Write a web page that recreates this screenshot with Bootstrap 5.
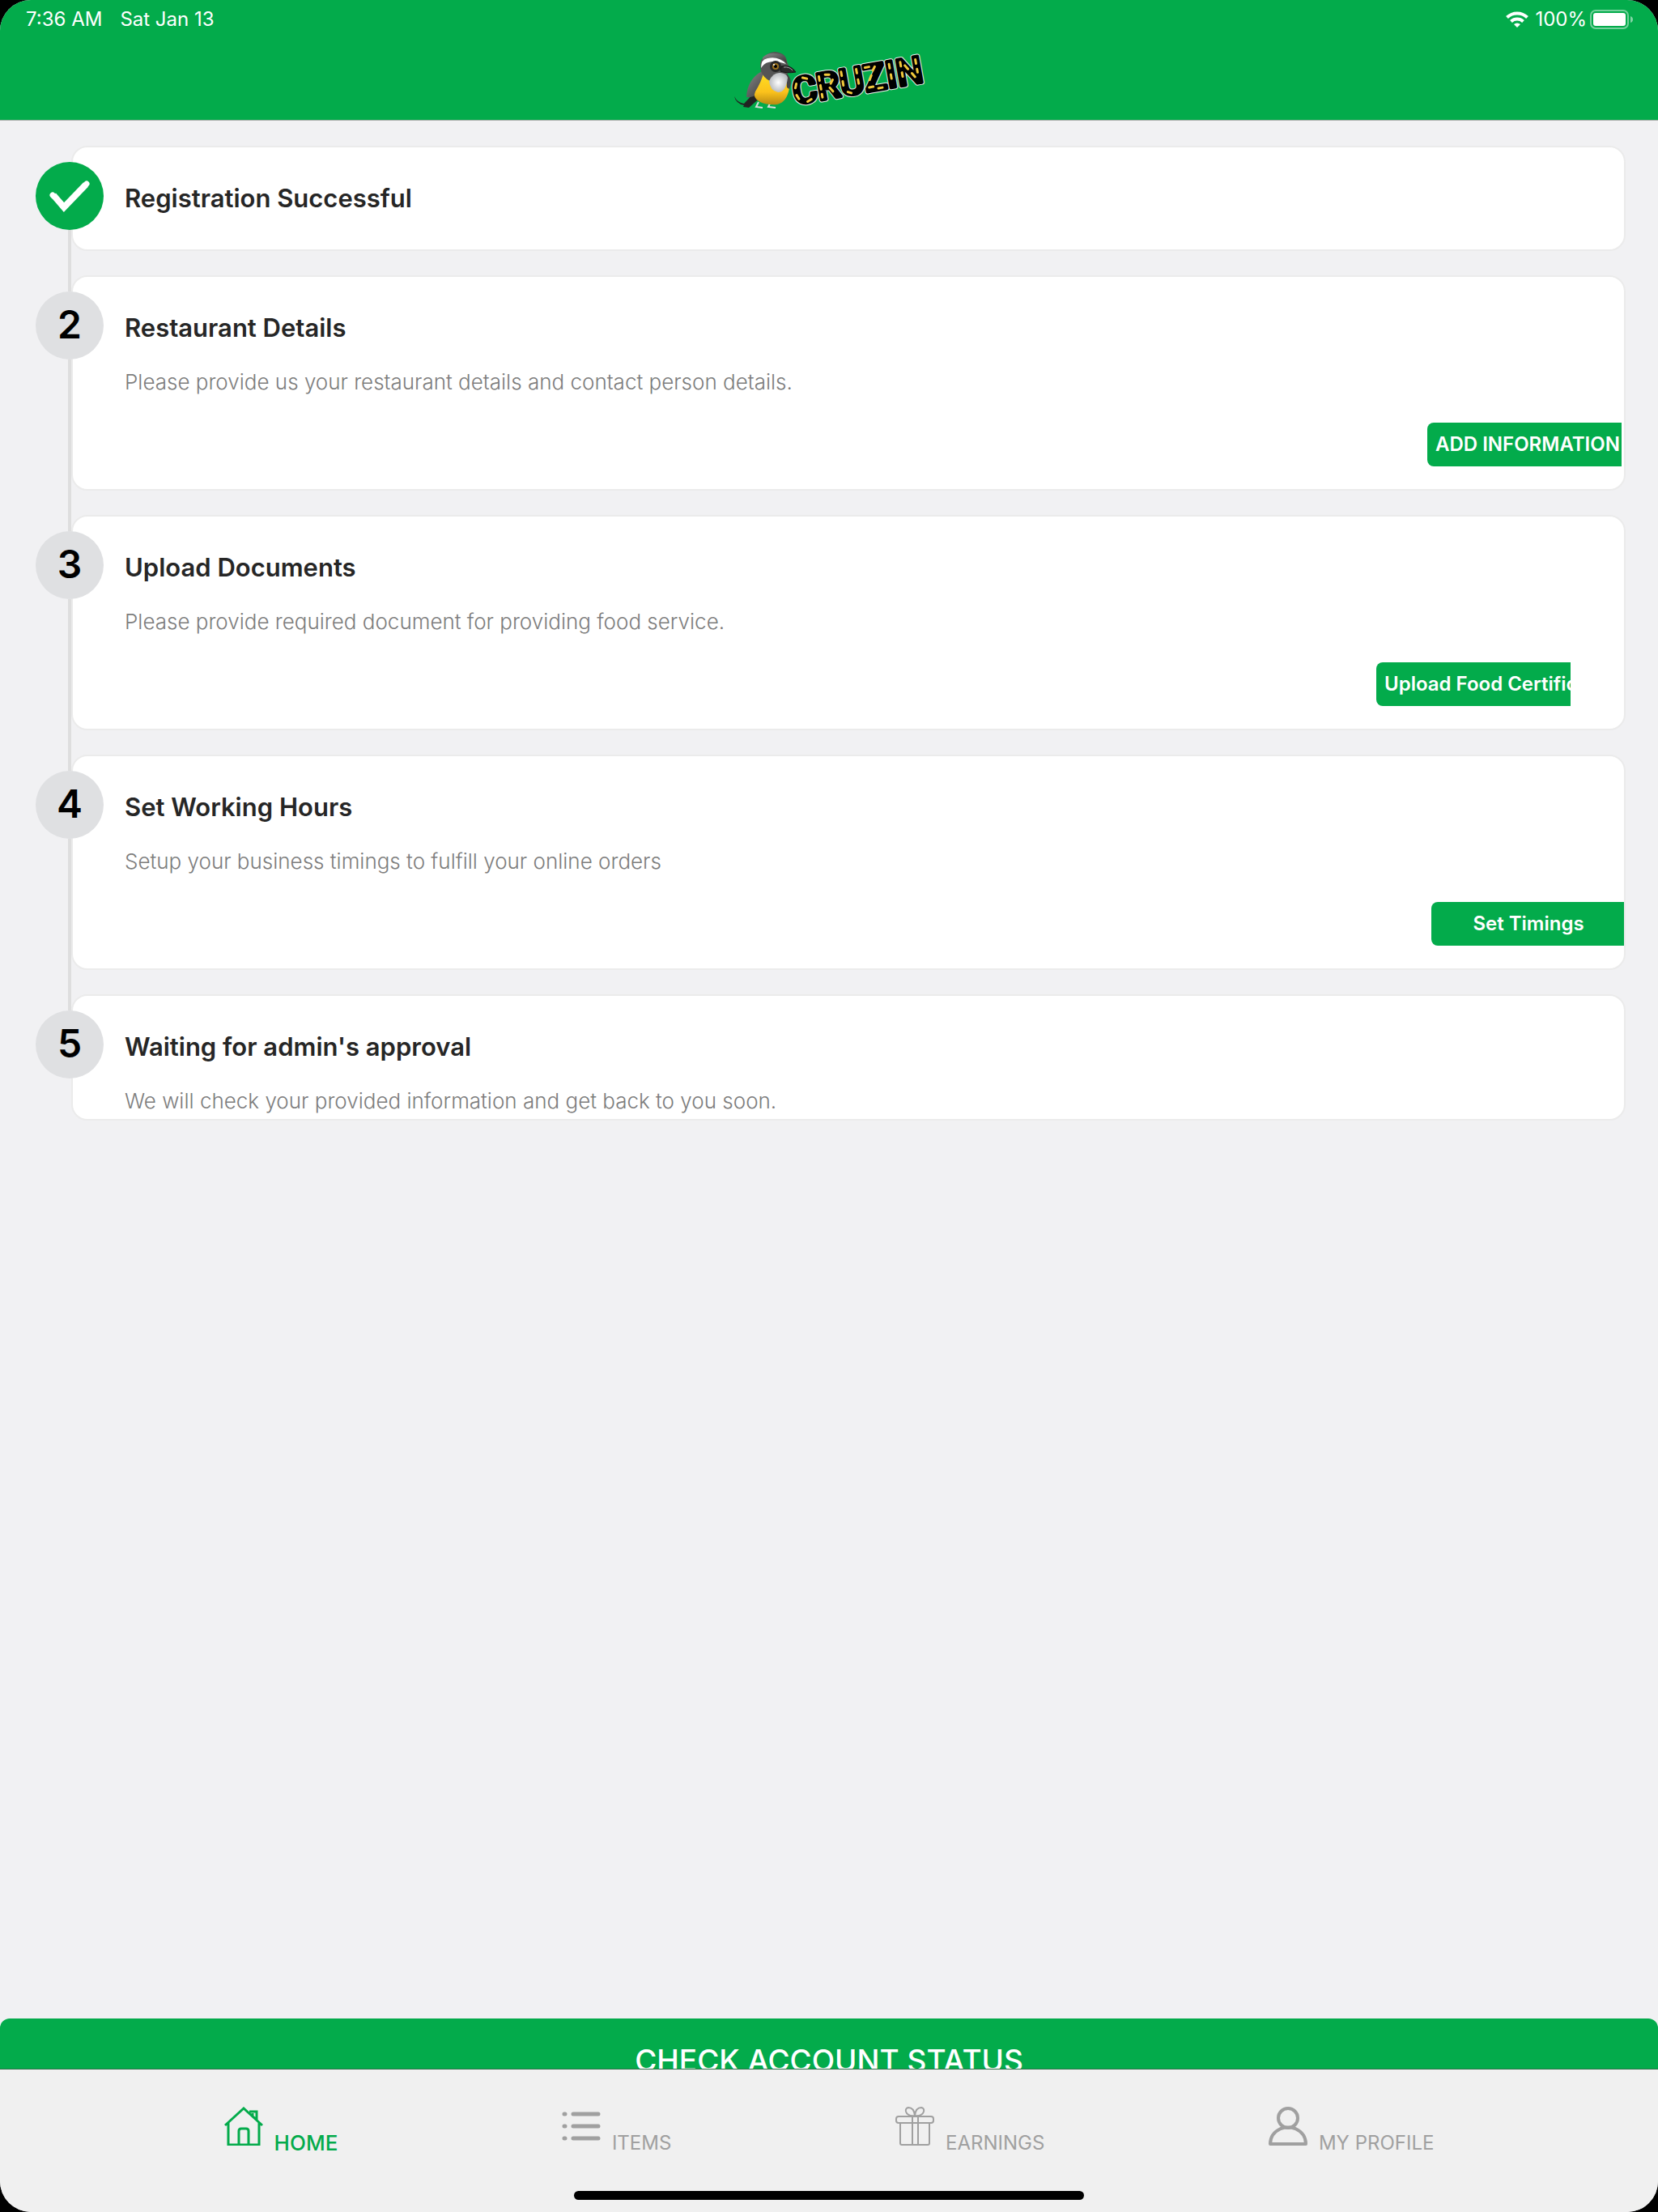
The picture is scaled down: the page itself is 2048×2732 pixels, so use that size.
<!DOCTYPE html>
<html lang="en">
<head>
<meta charset="utf-8">
<meta name="viewport" content="width=device-width, initial-scale=1">
<title>Cruzin</title>
<link rel="stylesheet" href="https://cdn.jsdelivr.net/npm/bootstrap@5.3.0/dist/css/bootstrap.min.css">
<script src="https://cdn.jsdelivr.net/npm/bootstrap@5.3.0/dist/js/bootstrap.bundle.min.js"></script>
<style>
:root { --brand: #03ab4b; --muted: #a0a0a0; --app-font: Inter, "Open Sans", sans-serif; }
body { background: #000; font-family: var(--app-font); }
.device { background: #f1f1f3; border-radius: 38px; }
.app-header { background: var(--brand); border-bottom: 1px solid #a3aaa6; padding: 8px 30px 10px 32px; }
.status-row { font-size: 24px; line-height: 32px; }
.status-row .clock { gap: 22px; }
.logo { height: 98px; overflow: visible; }
.steps { padding: 31px 40px 0 88px; gap: 30px; }
.step-card { background: #fff; border: 2px solid #ebebeb; border-radius: 20px; min-height: 130px; padding: 42px 0 28px 64px; overflow: hidden; }
.step-card.short { min-height: 156px; padding-bottom: 0; }
.step-title { font-size: 31px; line-height: 42px; font-weight: 600; color: #262626; margin: 0; }
.step-text { font-size: 26px; line-height: 36px; font-weight: 300; color: #7d7d7d; margin: 28px 0 0; }
.step-no { top: 20px; left: -44px; width: 84px; height: 84px; background: #dfe0e2; color: #000; font-size: 48px; font-weight: 600; line-height: 82px; }
.step-no.done { background: var(--brand); }
.rail { top: 104px; left: -4px; width: 4px; height: calc(100% - 54px); background: #dedede; }
.clip { width: 240px; height: 54px; margin-top: 32px; overflow: hidden; }
.clip-near { margin-right: 3px; }
.clip-far { margin-right: 66px; }
.clip-flush { margin-right: -2px; }
.step-btn { min-width: 240px; height: 54px; padding: 0 10px; border: 0; border-radius: 8px 0 0 8px; background: var(--brand); color: #fff; font-size: 24px; font-weight: 600; white-space: nowrap; }
.status-clip { height: 62px; overflow: hidden; }
.status-btn { height: 96px; border: 0; border-radius: 12px; background: var(--brand); color: #fff; font-size: 37px; font-weight: 500; line-height: 96px; padding: 4px 0 0; }
.tabs { background: #f0f0f0; border-top: 1px solid #2f7049; height: 177px; }
.tab-list { padding-top: 46px; }
.tab-item { color: var(--muted); font-size: 24px; line-height: 36px; gap: 14px; }
.tab-item svg { width: 48px; height: 48px; }
.tab-item span { margin-top: 27px; }
.tab-item.current { color: var(--brand); font-size: 26px; font-weight: 500; }
.home-bar { width: 630px; max-width: 60%; height: 11px; background: #000; border-radius: 6px; bottom: 15px; left: 50%; transform: translateX(-50%); }
</style>
</head>
<body>
<div class="device d-flex flex-column min-vh-100 overflow-hidden">
  <header class="app-header text-white">
    <div class="status-row d-flex justify-content-between">
      <div class="clock d-flex"><span>7:36 AM</span><span>Sat Jan 13</span></div>
      <div class="d-flex align-items-center">
        <svg width="28" height="20" viewBox="0 0 28 20" fill="none" stroke="#fff" stroke-width="4" class="me-2"><path d="M1.500 7.500a18 18 0 0 1 25 0M6.500 12.500a11 11 0 0 1 15 0"/><path d="M14 20l-4-4a6 6 0 0 1 8 0z" fill="#fff" stroke="none"/></svg>
        <span>100%</span>
        <svg width="54" height="24" viewBox="0 0 54 24" class="ms-1"><rect x="1" y="1" width="46" height="22" rx="6" fill="none" stroke="#fff" stroke-opacity=".45" stroke-width="2"/><rect x="4" y="4" width="40" height="16" rx="3" fill="#fff"/><path d="M50 8q3 1 3 4t-3 4z" fill="#fff" fill-opacity=".5"/></svg>
      </div>
    </div>
    <svg class="logo d-block mx-auto" width="240" viewBox="0 0 240 98" role="img" aria-label="Cruzin">
      <defs>
        <linearGradient id="yel" x1="0" y1="0" x2="0" y2="1"><stop offset="0" stop-color="#ffe022"/><stop offset=".6" stop-color="#fbc21c"/><stop offset="1" stop-color="#b98a12"/></linearGradient>
        <linearGradient id="gry" x1="0" y1="0" x2="1" y2="1"><stop offset="0" stop-color="#8a8a8a"/><stop offset="1" stop-color="#333"/></linearGradient>
        <radialGradient id="brs"><stop offset="0" stop-color="#fff"/><stop offset="1" stop-color="#b9bcc0"/></radialGradient>
      </defs>
      <path d="M2 79q4 8 12 9l14-15 8 6-16 14-7-1 1-2Q4 88 2 79z" fill="#222"/>
      <path d="M32 86l-3 6 8 1M46 88l-2 4 9 1" stroke="#ddd" stroke-width="2" fill="none"/>
      <path d="M36 48Q18 58 17 80q14 2 28-20z" fill="url(#gry)"/>
      <path d="M38 50Q36 60 28 73q-4 8 6 13 9 4 21 3 12-3 15-20l-4-17z" fill="url(#yel)"/>
      <path d="M66 50q9 8 4 20l-3-2z" fill="#444"/>
      <path d="M35 48Q32 36 38 31q5-6 14-7 14 1 15 12l4 10-8 12-17 2q-8-4-11-12z" fill="#555"/>
      <path d="M37 31q6-6 16-5 13 0 14 13-4-7-14-8-9-1-16 4z" fill="url(#gry)"/>
      <path d="M35 44q0-11 8-12 14-3 23 7-14-5-22-2-5 1-9 7z" fill="#fff"/>
      <path d="M45 60q5-11 14-10 8 1 9 6-2 18-12 18-10-2-11-14z" fill="url(#brs)"/>
      <circle cx="53" cy="42" r="7" fill="#272727"/><circle cx="53" cy="42" r="4" fill="#9a711d"/><circle cx="53" cy="42" r="2" fill="#000"/><circle cx="51" cy="40" r="1" fill="#fff"/>
      <path d="M60 42q11-3 18 7-11 2-19-1z" fill="#292929" stroke="#151515"/><path d="M63 43q7-1 11 4" stroke="#aaa" fill="none"/>
      <g transform="rotate(-10 78 89)">
        <text x="77" y="89" font-family="Roboto, sans-serif" font-weight="500" font-size="46" fill="#000" stroke="#e9f3ec" stroke-width="6" stroke-linejoin="round">CRUZIN</text>
        <text x="77" y="89" font-family="Roboto, sans-serif" font-weight="500" font-size="46" fill="#000" stroke="#000" stroke-width="4" stroke-linejoin="round" aria-hidden="true">CRUZIN</text>
        <path d="M97 60l-5-2M83 64l-2 5M81 78l2 5M93 88l5-2M112 60v5M112 71v5M112 82v4M120 59l5 1M128 67l-3 4M123 76l3 5M140 59v5M140 71v5M144 85l4 2M159 59v5M159 72v5M170 59h5M182 60l-3 4M176 70l-3 5M171 84h5M182 87h5M200 60v5M200 73v5M214 60v5M214 73v5M219 65l3 5M226 76l3 5M233 60v5M233 72v4" stroke="#f2c83a" stroke-width="3" stroke-linecap="round" fill="none"/>
      </g>
    </svg>
  </header>

  <main class="steps d-flex flex-column flex-grow-1">
    <section class="position-relative">
      <div class="step-card"><h2 class="step-title">Registration Successful</h2></div>
      <div class="rail position-absolute"></div>
      <div class="step-no done position-absolute rounded-circle"><svg class="d-block" width="84" height="84" viewBox="0 0 84 84" role="img" aria-label="Done"><path d="M22 41l13 15 27-28" fill="none" stroke="#fff" stroke-width="8" stroke-linejoin="miter"/><path d="M21 41l1 1M62 28l1-1" stroke="#fff" stroke-width="7" stroke-linecap="round"/></svg></div>
    </section>
    <section class="position-relative">
      <div class="step-card d-flex flex-column">
        <h2 class="step-title">Restaurant Details</h2>
        <p class="step-text">Please provide us your restaurant details and contact person details.</p>
        <div class="clip clip-near align-self-end"><button type="button" class="step-btn">ADD INFORMATION</button></div>
      </div>
      <div class="rail position-absolute"></div>
      <div class="step-no position-absolute rounded-circle text-center">2</div>
    </section>
    <section class="position-relative">
      <div class="step-card d-flex flex-column">
        <h2 class="step-title">Upload Documents</h2>
        <p class="step-text">Please provide required document for providing food service.</p>
        <div class="clip clip-far align-self-end"><button type="button" class="step-btn">Upload Food Certificate</button></div>
      </div>
      <div class="rail position-absolute"></div>
      <div class="step-no position-absolute rounded-circle text-center">3</div>
    </section>
    <section class="position-relative">
      <div class="step-card d-flex flex-column">
        <h2 class="step-title">Set Working Hours</h2>
        <p class="step-text">Setup your business timings to fulfill your online orders</p>
        <div class="clip clip-flush align-self-end"><button type="button" class="step-btn">Set Timings</button></div>
      </div>
      <div class="rail position-absolute"></div>
      <div class="step-no position-absolute rounded-circle text-center">4</div>
    </section>
    <section class="position-relative">
      <div class="step-card short">
        <h2 class="step-title">Waiting for admin's approval</h2>
        <p class="step-text">We will check your provided information and get back to you soon.</p>
      </div>
      <div class="step-no position-absolute rounded-circle text-center">5</div>
    </section>
  </main>

  <div class="status-clip"><button type="button" class="status-btn w-100">CHECK ACCOUNT STATUS</button></div>
  <nav class="tabs position-relative">
    <div class="tab-list d-flex justify-content-evenly">
      <a href="#" class="tab-item current d-flex text-decoration-none">
        <svg viewBox="0 0 48 48" fill="none" stroke="currentColor" stroke-width="3"><path d="M1 23L24 2l23 21M5 20v27h38V20M18 46V30q0-3 3-3h6q3 0 3 3v16M31 6h9v11M35 8v4l4 3"/></svg><span>HOME</span></a>
      <a href="#" class="tab-item d-flex text-decoration-none">
        <svg viewBox="0 0 48 48" fill="none" stroke="currentColor" stroke-width="5" stroke-linecap="round"><path d="M14 9h31M14 24h31M14 39h31M3 9h1M3 24h1M3 39h1"/></svg><span>ITEMS</span></a>
      <a href="#" class="tab-item d-flex text-decoration-none">
        <svg viewBox="0 0 48 48" fill="none" stroke="currentColor" stroke-width="2"><rect x="1" y="12" width="46" height="8" rx="3"/><path d="M6 20v25q0 2 2 2h32q2 0 2-2V20M21 12v35M28 12v35"/><path d="M24 11q-9 1-11-5-1-4 3-5 7 0 8 10zM24 11q9 1 11-5 1-4-3-5-7 0-8 10z"/></svg><span>EARNINGS</span></a>
      <a href="#" class="tab-item d-flex text-decoration-none">
        <svg viewBox="0 0 48 48" fill="none" stroke="currentColor" stroke-width="4" stroke-linejoin="round"><ellipse cx="24" cy="14" rx="12" ry="12"/><path d="M2 46q0-13 13-19 9-3 18 0 13 6 13 19z"/></svg><span>MY PROFILE</span></a>
    </div>
    <div class="home-bar position-absolute"></div>
  </nav>
</div>
</body>
</html>
